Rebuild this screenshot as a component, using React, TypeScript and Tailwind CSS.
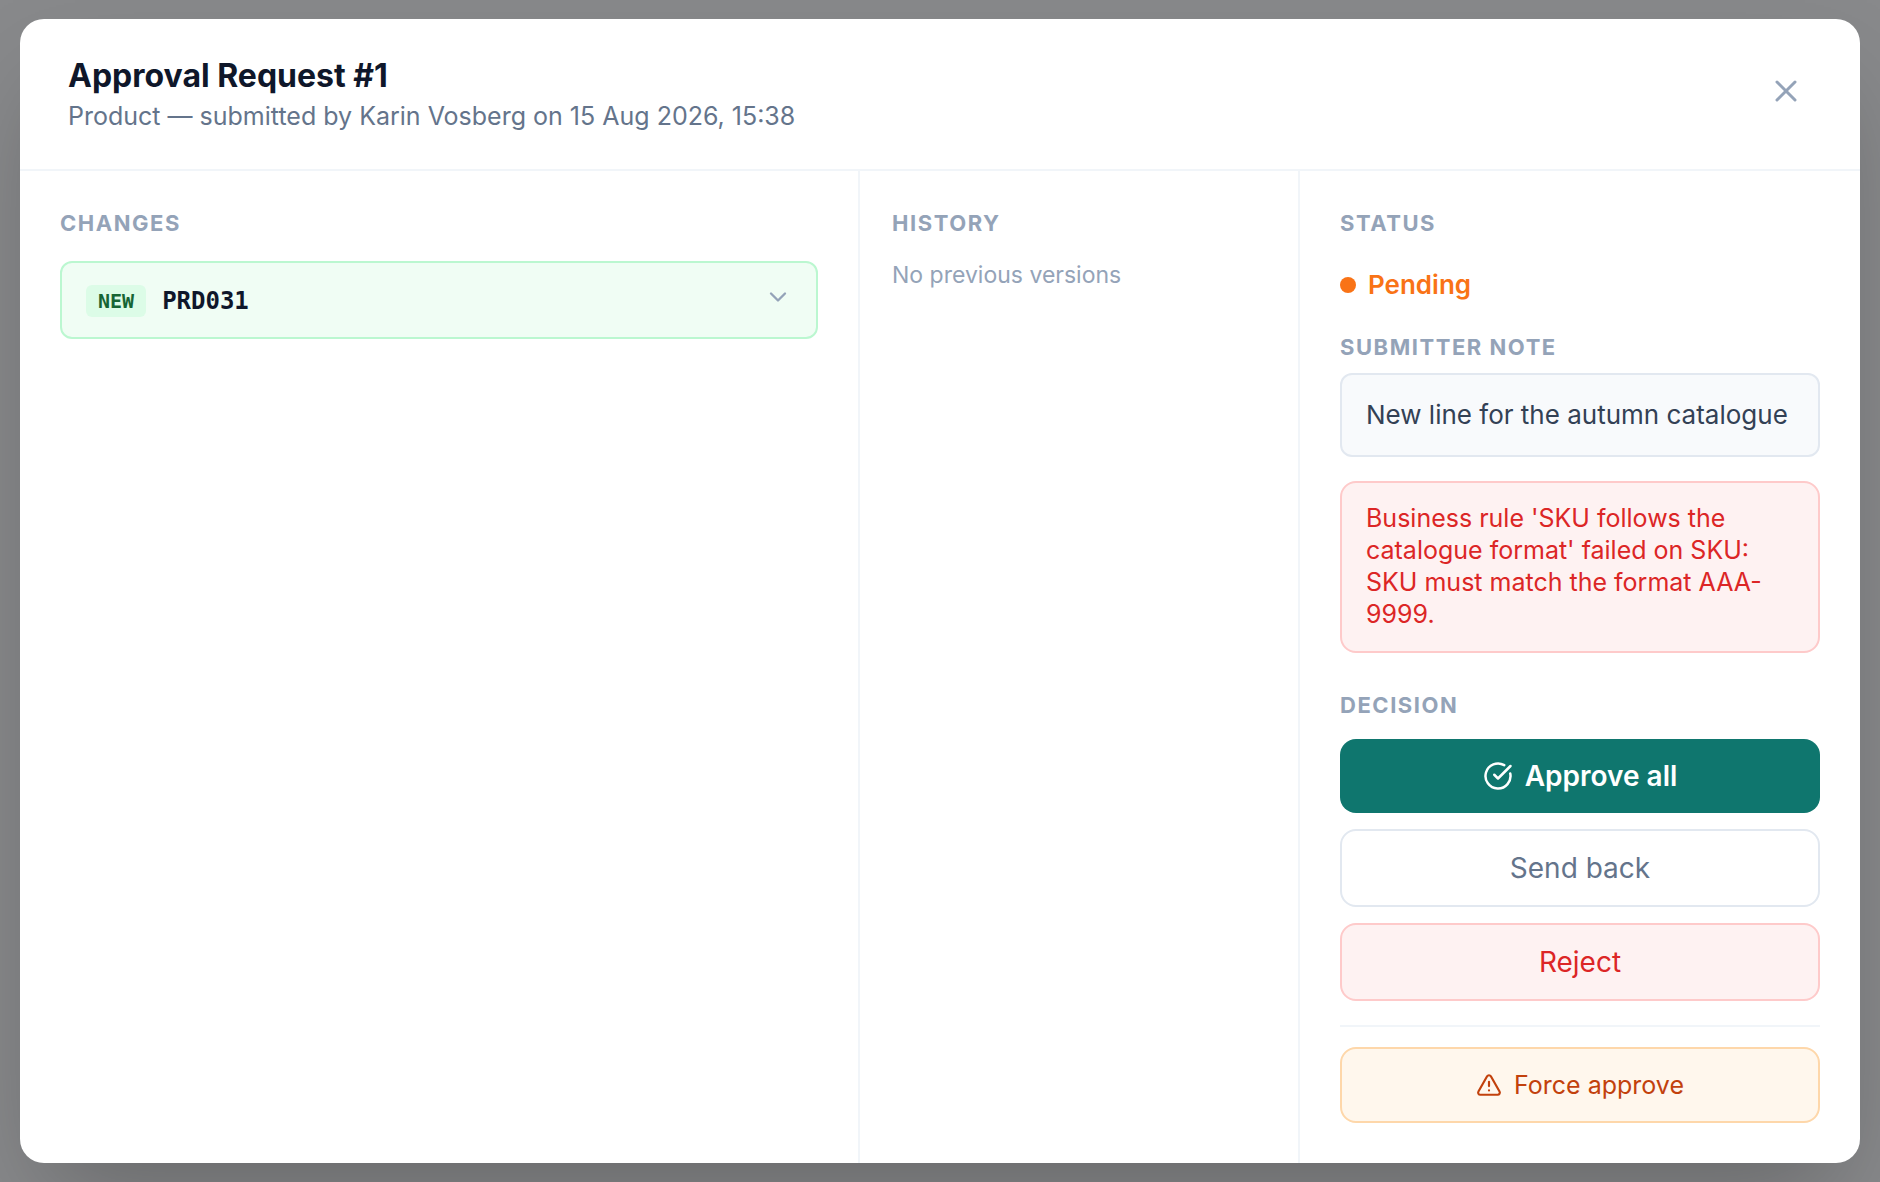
import type { ButtonHTMLAttributes, ReactNode } from "react";
import { ChevronDown, CircleCheckBig, TriangleAlert, X } from "lucide-react";
import clsx from "clsx";

const request = {
  id: 1,
  type: "Product",
  submitter: "Karin Vosberg",
  date: "15 Aug 2026, 15:38",
  note: "New line for the autumn catalogue",
  error:
    "Business rule 'SKU follows the catalogue format' failed on SKU: SKU must match the format AAA-9999.",
  changes: [{ kind: "NEW", code: "PRD031" }],
};

function SectionTitle({ children, className }: { children: ReactNode; className?: string }) {
  return (
    <h2
      className={clsx(
        "text-[22px] leading-8 font-bold tracking-[0.07em] uppercase text-[#94a3b8]",
        className
      )}
    >
      {children}
    </h2>
  );
}

function ActionButton({ className, ...props }: ButtonHTMLAttributes<HTMLButtonElement>) {
  return (
    <button
      type="button"
      className={clsx(
        "flex w-full cursor-pointer items-center justify-center gap-3 rounded-2xl",
        className
      )}
      {...props}
    />
  );
}

export default function App() {
  return (
    <div className="flex min-h-screen bg-[#88898b] px-5 py-[19px] font-['Inter',sans-serif]">
      <div
        role="dialog"
        aria-labelledby="dialog-title"
        className="flex flex-1 flex-col overflow-hidden rounded-3xl bg-white shadow-[0_50px_100px_-24px_rgba(0,0,0,0.25)]"
      >
        {/* Header */}
        <header className="flex items-start justify-between border-b-2 border-[#f1f5f9] pt-[37px] pr-[39px] pb-[33px] pl-12">
          <div>
            <h1 id="dialog-title" className="text-[32px] leading-10 font-bold text-[#0f172a]">
              Approval Request #{request.id}
            </h1>
            <p className="text-[25px] leading-10 text-[#64748b]">
              {request.type} — submitted by {request.submitter} on {request.date}
            </p>
          </div>
          <button type="button" aria-label="Close" className="cursor-pointer p-[17px] text-[#94a3b8]">
            <X size={36} />
          </button>
        </header>

        <div className="flex flex-1">
          {/* Changes */}
          <section className="flex-1 border-r-2 border-[#f1f5f9] px-10 pt-9 pb-10">
            <SectionTitle>Changes</SectionTitle>
            {request.changes.map((change) => (
              <button
                key={change.code}
                type="button"
                className="mt-[22px] flex w-full cursor-pointer items-start rounded-xl border-2 border-[#bbf7d0] bg-[#f0fdf4] px-6 pt-5 pb-[18px] font-['DejaVu_Sans_Mono',monospace] font-bold"
              >
                <span className="mt-0.5 rounded-md bg-[#dcfce7] px-3 text-[20px] leading-8 text-[#166534]">
                  {change.kind}
                </span>
                <span className="ml-4 text-[24px] leading-9 text-[#0f172a]">{change.code}</span>
                <ChevronDown size={28} className="ml-auto text-[#94a3b8]" />
              </button>
            ))}
          </section>

          {/* History */}
          <section className="w-[440px] shrink-0 border-r-2 border-[#f1f5f9] px-8 pt-9 pb-10">
            <SectionTitle>History</SectionTitle>
            <p className="mt-5 text-[23px] leading-8 text-[#94a3b8]">No previous versions</p>
          </section>

          {/* Status and decision */}
          <section className="w-[560px] shrink-0 px-10 pt-9 pb-10">
            <SectionTitle>Status</SectionTitle>
            <div className="mt-[26px] flex items-center gap-3 text-[26px] leading-10 font-semibold text-[#f97316]">
              <span className="size-4 rounded-full bg-[#f97316]" />
              Pending
            </div>

            <SectionTitle className="mt-[26px]">Submitter note</SectionTitle>
            <p className="mt-2.5 rounded-xl border-2 border-[#e2e8f0] bg-[#f8fafc] px-6 py-5 text-[26px] leading-10 text-[#334155]">
              {request.note}
            </p>

            <p
              role="alert"
              className="mt-6 rounded-2xl border-2 border-[#fecaca] bg-[#fef2f2] px-6 pt-[19px] pb-[21px] text-[25px] leading-8 text-[#dc2626]"
            >
              {request.error}
            </p>

            <SectionTitle className="mt-9">Decision</SectionTitle>
            <div className="mt-[18px] flex flex-col gap-4">
              <ActionButton className="bg-[#0f766e] py-[17px] text-[28px] leading-10 font-semibold text-white">
                <CircleCheckBig size={30} />
                Approve all
              </ActionButton>
              <ActionButton className="border-2 border-[#e2e8f0] bg-white py-[17px] text-[28px] leading-10 text-[#64748b]">
                Send back
              </ActionButton>
              <ActionButton className="border-2 border-[#fecaca] bg-[#fef2f2] py-[17px] text-[28px] leading-10 text-[#dc2626]">
                Reject
              </ActionButton>
            </div>

            <div className="mt-6 border-t-2 border-[#f1f5f9] pt-5">
              <ActionButton className="border-2 border-[#fed7aa] bg-[#fff7ed] py-4 text-[25px] leading-10 text-[#c2410c]">
                <TriangleAlert size={26} />
                Force approve
              </ActionButton>
            </div>
          </section>
        </div>
      </div>
    </div>
  );
}
